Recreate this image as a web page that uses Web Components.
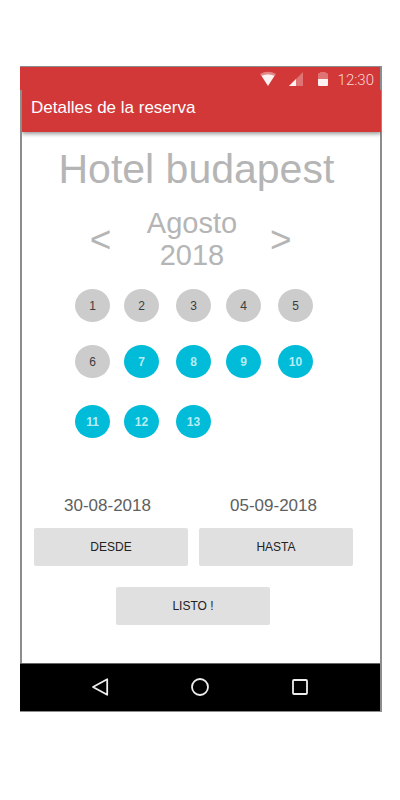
<!DOCTYPE html>
<html lang="es">
<head>
<meta charset="utf-8">
<title>Detalles de la reserva</title>
<style>
html,body{margin:0;background:#fff}
body{width:400px;height:800px;overflow:hidden;font-family:"Liberation Sans",Arial,sans-serif}
</style>
</head>
<body>
<booking-screen></booking-screen>
<script>
const define = (name, html) => customElements.define(name, class extends HTMLElement {
  constructor() {
    super();
    this.attachShadow({mode: "open"}).innerHTML = html;
  }
});

define("status-bar", `
<style>
:host{display:flex;align-items:center;justify-content:flex-end;box-sizing:border-box;width:360px;height:24px;padding-right:6px;background:#d23838}
svg{display:block;width:70px;height:24px;margin-right:8px}
span{font:300 15px/24px Roboto,sans-serif;color:#f6d7d7;padding-top:2px}
</style>
<svg viewBox="0 0 70 24">
  <path d="M0 7Q8 2.500 16 7L14.600 9Q8 5.800 1.400 9Z" fill="#e38686"/>
  <path d="M1.400 8.800Q8 5.500 14.600 8.800L8 19Z" fill="#fdf1f1"/>
  <path d="M43 5V19H29Z" fill="#e07373"/><path d="M36 12V19H29Z" fill="#fdf1f1"/>
  <path d="M58 7.500q0-1.500 1-1.500h1q0-1 1-1h4q1 0 1 1h1q1 0 1 1.500V12H58Z" fill="#e07373"/>
  <path d="M58 12H68V18q0 1-1 1H59q-1 0-1-1Z" fill="#fdf1f1"/>
</svg><span>12:30</span>`);

define("app-bar", `
<style>
:host{display:block;box-sizing:border-box;width:359px;height:42px;padding:1px 0 0 9px;margin-left:2px;background:#d23838;box-shadow:0 2px 4px rgba(0,0,0,.4);color:#fff;font-size:17px;line-height:34px;clip-path:inset(0 0 -8px 0)}
</style><slot></slot>`);

define("month-picker", `
<style>
:host{display:grid;grid-template-columns:57px 126px 56px;justify-content:start;align-items:center;height:64px;margin:14px 0 0 50px;color:#b5b5b5;text-align:center}
div{font-size:29px;line-height:32px}
span{font-size:37px;line-height:40px;padding-top:2px}
span:first-child{text-align:right;padding-right:21px}
span:last-child{text-align:left;padding-left:15px}
</style>
<span>&lt;</span><div><slot></slot></div><span>&gt;</span>`);

define("day-cell", `
<style>
:host{display:block;width:35px;height:33px;border-radius:50%;background:#ccc;color:#3c3c3c;text-align:center;font-size:12px;line-height:35px}
:host([free]){background:#00bcd8;color:#b5edf5;font-weight:bold}
</style><slot></slot>`);

define("day-grid", `
<style>
:host{display:grid;grid-template-columns:49px 52px 50px 52px 35px;grid-template-rows:56px 60px 33px;margin:18px 0 0 53px}
</style><slot></slot>`);

define("flat-button", `
<style>
:host{display:block}
button{display:block;width:154px;height:38px;padding:0;border:0;border-radius:2px;background:#e0e0e0;color:#222;font:12px/38px "Liberation Sans",Arial,sans-serif}
</style><button><slot></slot></button>`);

define("date-field", `
<style>
:host{display:block;width:154px}
div{font-size:17px;line-height:24px;height:34px;color:#606060;padding-left:30px}
:host([end]) div{padding-left:31px}
</style><div><slot name="date"></slot></div><flat-button><slot></slot></flat-button>`);

define("nav-bar", `
<style>
:host{display:flex;justify-content:center;gap:80px;align-items:center;box-sizing:border-box;width:360px;height:49px;border-top:1px solid #666;border-bottom:1px solid #8d8d8d;background:#000}
svg{display:block;width:20px;height:20px;margin-bottom:1px;fill:none;stroke:#eee;stroke-width:1.800;stroke-linejoin:round}
</style>
<svg viewBox="0 0 20 20"><path d="M17.200 2.200V17.800L3 10Z"/></svg>
<svg viewBox="0 0 20 20"><circle cx="10" cy="10" r="8"/></svg>
<svg viewBox="0 0 20 20"><rect x="3" y="3" width="14" height="14" rx="1"/></svg>`);

define("booking-screen", `
<style>
:host{display:block;padding:66px 0 0 20px}
.phone{width:362px;height:646px;display:flex;flex-direction:column;background:linear-gradient(90deg,#8d8d8d 2px,#fff 2px 360px,#8d8d8d 360px)}
.top{border-top:1px solid #8d8d8d}
main{flex:1;min-height:0;padding-left:2px}
h1{margin:17px 0 0 36.500px;height:44px;font-size:41px;line-height:40px;font-weight:normal;color:#b5b5b5;white-space:nowrap}
.dates{display:flex;gap:11px;margin:56px 0 0 12px}
.done{margin:21px 0 0 94px}
</style>
<div class="phone">
  <status-bar class="top"></status-bar>
  <app-bar>Detalles de la reserva</app-bar>
  <main>
    <h1>Hotel budapest</h1>
    <month-picker>Agosto<br>2018</month-picker>
    <day-grid>
      <day-cell>1</day-cell><day-cell>2</day-cell><day-cell>3</day-cell><day-cell>4</day-cell><day-cell>5</day-cell>
      <day-cell>6</day-cell><day-cell free>7</day-cell><day-cell free>8</day-cell><day-cell free>9</day-cell><day-cell free>10</day-cell>
      <day-cell free>11</day-cell><day-cell free>12</day-cell><day-cell free>13</day-cell>
    </day-grid>
    <div class="dates">
      <date-field><span slot="date">30-08-2018</span>DESDE</date-field>
      <date-field end><span slot="date">05-09-2018</span>HASTA</date-field>
    </div>
    <flat-button class="done">LISTO !</flat-button>
  </main>
  <nav-bar></nav-bar>
</div>`);
</script>
</body>
</html>
